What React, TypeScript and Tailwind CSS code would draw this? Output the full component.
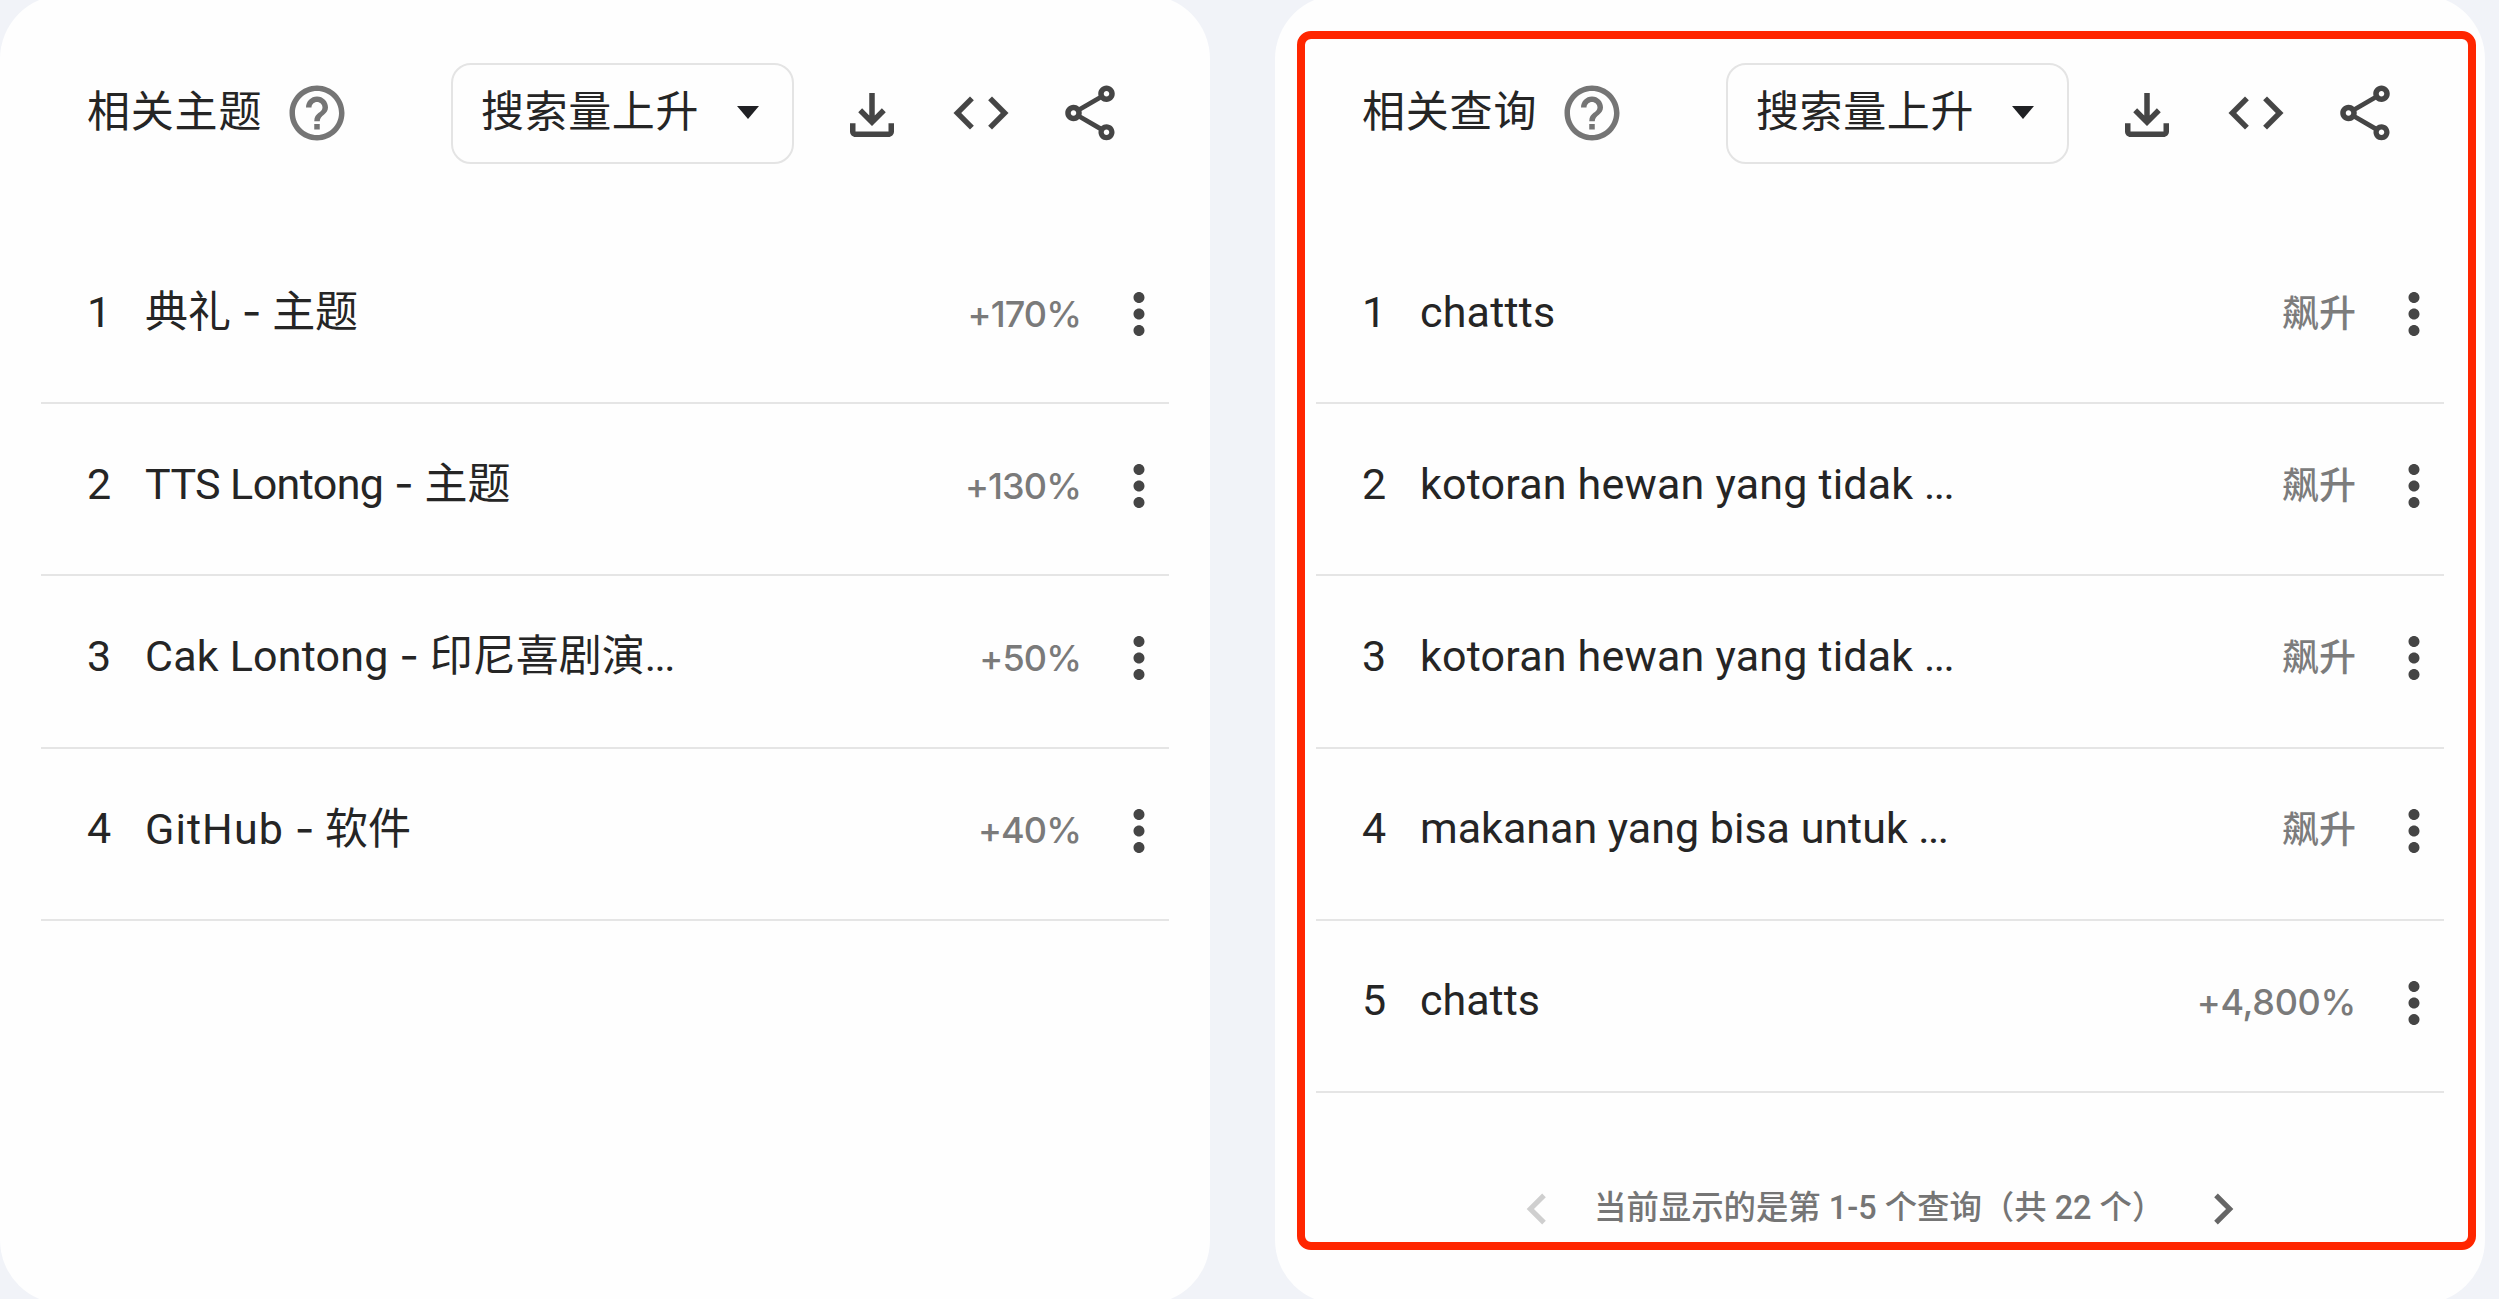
import type { ReactNode } from "react";
import { MdChevronLeft, MdChevronRight, MdCode, MdHelpOutline, MdMoreVert, MdOutlineFileDownload, MdOutlineShare } from "react-icons/md";

type Row = { title: ReactNode; value: ReactNode; rising?: boolean };

const Dots = () => <span className="tracking-[-1.6px]">...</span>;
const Dash = () => <span> <span className="font-['Inter',sans-serif]">-</span> </span>;

const topics: Row[] = [
  { title: <>典礼<Dash />主题</>, value: "+170%" },
  { title: <><span className="tracking-[-0.6px]">TTS Lontong</span><Dash />主题</>, value: "+130%" },
  { title: <><span className="tracking-[0.2px]">Cak Lontong</span><Dash />印尼喜剧演<Dots /></>, value: "+50%" },
  { title: <><span className="tracking-[1.1px]">GitHub</span><Dash />软件</>, value: "+40%" },
];

const queries: Row[] = [
  { title: <span className="tracking-[0.2px]">chattts</span>, value: "飙升", rising: true },
  { title: <><span className="tracking-[0.2px]">kotoran hewan yang tidak</span> <Dots /></>, value: "飙升", rising: true },
  { title: <><span className="tracking-[0.2px]">kotoran hewan yang tidak</span> <Dots /></>, value: "飙升", rising: true },
  { title: <>makanan yang bisa untuk <Dots /></>, value: "飙升", rising: true },
  { title: "chatts", value: <span className="tracking-[-0.3px]">+4,800%</span> },
];

function Header({ title }: { title: string }) {
  return (
    <header className="flex h-[101px] items-center pl-[87px] text-[43px] leading-[60px]">
      <h2 className="w-[197px] whitespace-nowrap pb-[4px] tracking-[0.8px]">{title}</h2>
      <MdHelpOutline className="mb-[2px] size-[66px] shrink-0 text-[#757575]" />
      <button className="ml-[101px] flex h-[101px] w-[343px] shrink-0 items-center rounded-[20px] border-2 border-[#e4e4e4] pl-[28px]">
        <span className="w-[256px] whitespace-nowrap pb-[4px] text-left tracking-[0.6px]">搜索量上升</span>
        <svg viewBox="0 0 22 13" className="mb-[2px] h-[13px] w-[22px] shrink-0 fill-[#202124]">
          <path d="M0 0h22L11 13z" />
        </svg>
      </button>
      <div className="mb-[2px] ml-[44.5px] flex gap-[43px] text-[#454545]">
        <MdOutlineFileDownload className="mt-[2px] -mb-[2px] size-[66px]" />
        <MdCode className="size-[66px]" />
        <MdOutlineShare className="size-[66px]" />
      </div>
    </header>
  );
}

function Card({ title, rows, children }: { title: string; rows: Row[]; children?: ReactNode }) {
  return (
    <section className="-mt-[5px] h-[1309px] w-[1210px] shrink-0 rounded-[64px] bg-[#fefefe] pt-[68px]">
      <Header title={title} />
      <ol className="mx-[41px] mt-[68px]">
        {rows.map((row, i) => (
          <li key={i} className="flex h-[172.2px] items-center border-b-[2.5px] border-[#e5e5e5] pl-[46px] text-[43px] leading-[60px]">
            <span className="w-[58px] pb-[11px]">{i + 1}</span>
            <span className="flex-1 whitespace-pre pb-[11px]">{row.title}</span>
            <span
              className={
                row.rising
                  ? "pb-[5px] text-[37px] font-medium text-[#7c7c7c]"
                  : "pb-[7px] font-['Inter',sans-serif] text-[36px] font-medium tracking-[-0.9px] text-[#7a7a7a]"
              }
            >
              {row.value}
            </span>
            <MdMoreVert className="mr-[-3px] mb-[6px] ml-[25px] size-[66px] text-[#454545]" />
          </li>
        ))}
      </ol>
      {children}
    </section>
  );
}

export default function App() {
  return (
    <main className="relative flex h-[1299px] w-full gap-[65px] overflow-hidden bg-[#f1f3f8] font-['Roboto','Noto_Sans_CJK_SC',sans-serif] text-[#252525]" lang="zh-CN">
      <Card title="相关主题" rows={topics} />
      <Card title="相关查询" rows={queries}>
        <nav className="mt-[85px] flex h-[62px] items-center pl-[231px] text-[32.4px] font-medium text-[#757575]">
          <MdChevronLeft className="size-[62px] shrink-0 text-[#cfcfcf]" />
          <span className="ml-[26px] w-[598px] whitespace-nowrap pb-px leading-[48px]">当前显示的是第 1-5 个查询（共 22 个）</span>
          <MdChevronRight className="size-[62px] shrink-0 text-[#666666]" />
        </nav>
      </Card>
      <div className="pointer-events-none absolute top-[31px] left-[1297px] h-[1219px] w-[1179px] rounded-[14px] border-8 border-[#ff2600]" />
    </main>
  );
}
